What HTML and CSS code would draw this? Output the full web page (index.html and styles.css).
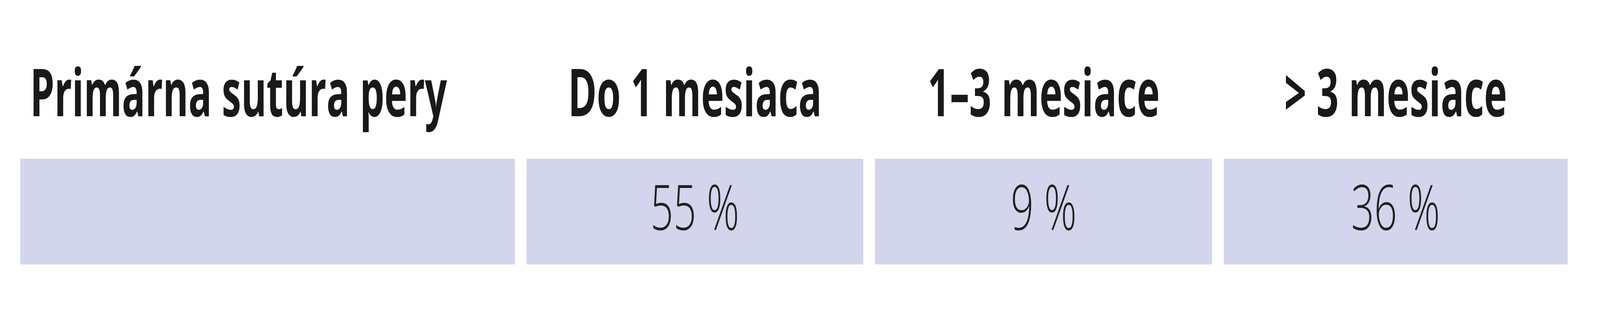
FILE: index.html
```html
<!DOCTYPE html>
<html lang="sk">
<head>
<meta charset="utf-8">
<title>Primárna sutúra pery</title>
<link rel="stylesheet" href="styles.css">
</head>
<body>
<div class="table">
  <div class="th th-first"><span class="lbl">Primárna sutúra pery</span></div>
  <div class="th"><span class="lbl">Do 1 mesiaca</span></div>
  <div class="th"><span class="lbl">1–3 mesiace</span></div>
  <div class="th"><span class="lbl">&gt; 3 mesiace</span></div>
  <div class="td"></div>
  <div class="td"><span class="val">55 %</span></div>
  <div class="td"><span class="val">9 %</span></div>
  <div class="td"><span class="val">36 %</span></div>
</div>
</body>
</html>
```

FILE: styles.css
```css
:root {
  /* one reference pixel, horizontally, relative to the 6278px-wide design */
  --u: calc(100vw / 6278);
  /* unitless horizontal ratio between the viewport and the 6278px design */
  --sx: tan(atan2(100vw, 6278px));
}

html, body {
  margin: 0;
  padding: 0;
  background: #ffffff;
}

body {
  height: 800px;
  overflow: hidden;
}

.table {
  display: grid;
  grid-template-columns:
    calc(1940 * var(--u))
    calc(1322 * var(--u))
    calc(1322 * var(--u))
    calc(1349 * var(--u));
  column-gap: calc(46 * var(--u));
  row-gap: 71px;
  padding: 130px 0 0 calc(80 * var(--u));
  font-family: "Open Sans", "Noto Sans", sans-serif;
  color: #1a1818;
}

.th {
  display: flex;
  justify-content: center;
  align-items: center;
  height: 206px;
  font-size: 168px;
  font-weight: 700;
  line-height: 206px;
}

.th-first {
  justify-content: flex-start;
  padding-left: calc(38 * var(--u));
}

.lbl {
  flex: none;
  white-space: nowrap;
  transform: scaleX(calc(var(--sx) * 0.905));
  transform-origin: center center;
}

.th-first .lbl {
  transform-origin: left center;
}

.td {
  display: flex;
  justify-content: center;
  align-items: flex-start;
  height: 239px;
  padding-bottom: 32px;
  background: #d2d5eb;
  color: #231f20;
  font-size: 161px;
  font-weight: 300;
  line-height: 239px;
}

.val {
  flex: none;
  white-space: nowrap;
  transform: scaleX(calc(var(--sx) * 0.98));
  transform-origin: center center;
}
```
